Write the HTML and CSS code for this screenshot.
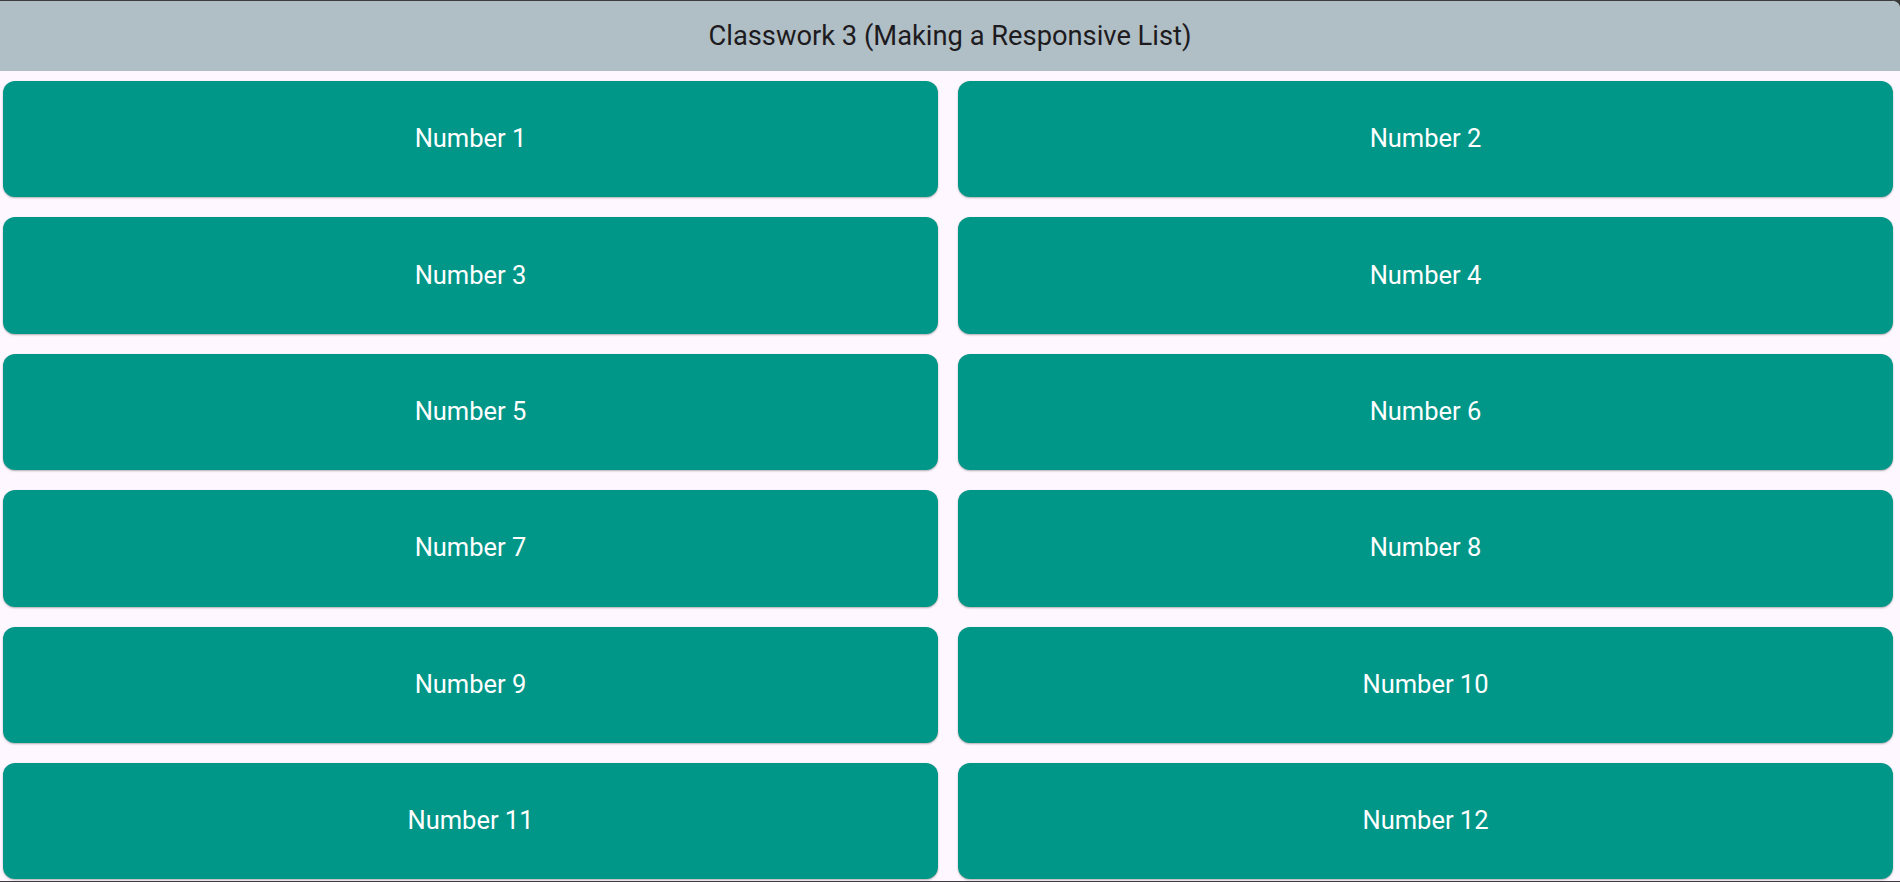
FILE: index.html
```html
<!DOCTYPE html>
<html>
<head>
<meta charset="utf-8">
<link rel="stylesheet" href="styles.css">
</head>
<body>
<div class="window">
  <header class="appbar">
    <h1 class="title">Classwork 3 (Making a Responsive List)</h1>
  </header>
  <main class="grid">
    <div class="card">Number 1</div>
    <div class="card">Number 2</div>
    <div class="card">Number 3</div>
    <div class="card">Number 4</div>
    <div class="card">Number 5</div>
    <div class="card">Number 6</div>
    <div class="card">Number 7</div>
    <div class="card">Number 8</div>
    <div class="card">Number 9</div>
    <div class="card">Number 10</div>
    <div class="card">Number 11</div>
    <div class="card">Number 12</div>
  </main>
</div>
</body>
</html>
```
FILE: styles.css
```css
html, body {
  margin: 0;
  padding: 0;
  background: #3a3a3a;
}
.window {
  box-sizing: border-box;
  width: 1900px;
  height: 882px;
  border-top: 1px solid #3c3c3c;
  border-bottom: 1px solid #3c3c3c;
  border-top-right-radius: 8px;
  background: #fef7ff;
  overflow: hidden;
  font-family: Roboto, "Liberation Sans", sans-serif;
}
.appbar {
  height: 70px;
  background: #b0bec5;
  display: flex;
  align-items: center;
  justify-content: center;
}
.title {
  margin: 0;
  font-size: 27.3px;
  font-weight: 400;
  color: #1d1b20;
}
.grid {
  display: grid;
  grid-template-columns: 1fr 1fr;
  grid-auto-rows: 116.4px;
  gap: 20px;
  padding: 10px 7px 0 3px;
}
.card {
  box-sizing: border-box;
  padding-bottom: 2px;
  background: #009688;
  border-radius: 12px;
  box-shadow: 0 1px 2px rgba(0, 0, 0, 0.3);
  display: flex;
  align-items: center;
  justify-content: center;
  color: #ffffff;
  font-size: 25.5px;
}
```
